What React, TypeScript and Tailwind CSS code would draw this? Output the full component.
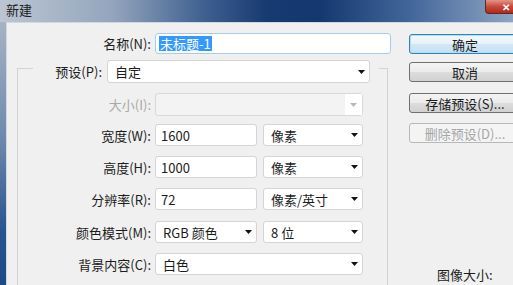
import type { ReactNode } from "react"

function Arrow({ muted = false }: { muted?: boolean }) {
  return (
    <svg width="7" height="4" viewBox="0 0 7 4" className="shrink-0">
      <path d="M0 0h7L3.5 4z" fill={muted ? "#b8b8b8" : "#111"} />
    </svg>
  )
}

function Select({ value, className }: { value: string; className: string }) {
  return (
    <div
      className={`flex h-[22px] shrink-0 items-center justify-between rounded-[3px] border border-[#d4d4d4] bg-white pl-[7px] pr-[4px] ${className}`}
    >
      <span>{value}</span>
      <Arrow />
    </div>
  )
}

function Input({ value, className }: { value: string; className: string }) {
  return (
    <div className={`flex h-[22px] shrink-0 items-center rounded-[3px] border border-[#d4d4d4] bg-white pl-[5px] ${className}`}>
      {value}
    </div>
  )
}

function Row({ label, className, muted = false, children }: { label: string; className: string; muted?: boolean; children: ReactNode }) {
  return (
    <div className={`flex items-center ${className}`}>
      <div className={`w-[133px] shrink-0 text-right ${muted ? "text-[#a8a8a8]" : ""}`}>{label}</div>
      <div className="ml-[4px] flex gap-[6px]">{children}</div>
    </div>
  )
}

function Button({ label, className }: { label: string; className: string }) {
  return (
    <div className={`flex h-[20px] w-[112px] items-center justify-center rounded-[3px] border ${className}`}>
      {label}
    </div>
  )
}

export default function App() {
  return (
    <div className="h-[285px] w-[513px] overflow-hidden bg-[#f0f0f0] text-[13px] leading-none text-[#1c1c1c] font-['Noto_Sans_CJK_SC','Noto_Sans',sans-serif]">
      {/* title bar */}
      <div className="flex h-[22px] items-start bg-[linear-gradient(90deg,#bcc6d2_0%,#93a5bd_22%,#3e5f8f_40%,#173a72_52%,#143770_62%,#43669a_80%,#8ea5c2_100%)]">
        <span className="ml-[6px] mt-[3px] text-[13px] leading-[14px] text-[#202020]">新建</span>
        <div className="flex-1" />
        <div className="flex h-[14px] w-[28px] shrink-0 items-center justify-end rounded-bl-[4px] border border-r-0 border-t-0 border-[#5a2a2a] bg-[linear-gradient(180deg,#e3968a,#c74a3a_50%,#b2281b)] pr-[3px] text-[10px] font-bold text-white">
          ✕
        </div>
      </div>

      <div className="flex h-[263px]">
        {/* left window frame */}
        <div className="w-[6px] shrink-0 bg-[linear-gradient(180deg,#a6b3c4,#6e88ad_45%,#27538f_80%,#1f4a88)]" />

        {/* client area */}
        <div className="flex flex-1 border-l border-t border-[#d2d8e0] bg-[#f0f0f0]">
          {/* form column */}
          <div className="w-[384px] shrink-0 pt-[10px]">
            <div className="flex items-center">
              <div className="w-[144px] shrink-0 text-right">名称(N):</div>
              <div className="ml-[4px] flex h-[21px] w-[236px] shrink-0 items-center rounded-[3px] border border-[#a9cbe8] bg-white pl-[3px]">
                <span className="bg-[#3399ff] px-[1px] leading-[15px] text-white">未标题-1</span>
              </div>
            </div>

            {/* group box */}
            <div className="ml-[10px] mt-[14px] h-[230px] w-[371px] border-l border-r border-t border-[#d3d3d3]">
              <div className="-mt-[9px] ml-[15px] flex h-[23px] w-[346px] items-center bg-[#f0f0f0]">
                <div className="w-[69px] shrink-0 text-right">预设(P):</div>
                <div className="ml-[5px] flex h-[23px] w-[263px] shrink-0 items-center justify-between rounded-[3px] border border-[#d4d4d4] bg-white pl-[7px] pr-[4px]">
                  <span>自定</span>
                  <Arrow />
                </div>
              </div>

              <Row label="大小(I):" className="mt-[10px]" muted>
                <div className="flex h-[23px] w-[208px] items-center justify-end rounded-[3px] border border-[#d8d8d8] bg-[#f3f3f3]">
                  <div className="flex h-[21px] w-[17px] items-center justify-center bg-white">
                    <Arrow muted />
                  </div>
                </div>
              </Row>

              <Row label="宽度(W):" className="mt-[8px]">
                <Input value="1600" className="w-[102px]" />
                <Select value="像素" className="w-[100px]" />
              </Row>

              <Row label="高度(H):" className="mt-[10px]">
                <Input value="1000" className="w-[102px]" />
                <Select value="像素" className="w-[100px]" />
              </Row>

              <Row label="分辨率(R):" className="mt-[10px]">
                <Input value="72" className="w-[102px]" />
                <Select value="像素/英寸" className="w-[100px]" />
              </Row>

              <Row label="颜色模式(M):" className="mt-[11px]">
                <Select value="RGB 颜色" className="w-[102px]" />
                <Select value="8 位" className="w-[100px]" />
              </Row>

              <Row label="背景内容(C):" className="mt-[10px]">
                <Select value="白色" className="w-[208px]" />
              </Row>
            </div>
          </div>

          {/* button column */}
          <div className="ml-[18px] shrink-0 pt-[11px]">
            <Button
              label="确定"
              className="border-[#3c7fb1] bg-[linear-gradient(180deg,#f4f9fc,#e5f1f9_50%,#d3e7f4_51%,#c6e0f2)] shadow-[inset_0_0_0_1px_#a9e2f7]"
            />
            <Button
              label="取消"
              className="mt-[8px] border-[#707070] bg-[linear-gradient(180deg,#f4f4f4,#ebebeb_50%,#dddddd_51%,#d1d1d1)]"
            />
            <Button
              label="存储预设(S)..."
              className="mt-[11px] border-[#707070] bg-[linear-gradient(180deg,#f4f4f4,#ebebeb_50%,#dddddd_51%,#d1d1d1)]"
            />
            <Button label="删除预设(D)..." className="mt-[10px] border-[#b5b9bc] bg-[#f4f4f4] text-[#a6a6a6]" />
            <div className="ml-[28px] mt-[124px] leading-[16px]">图像大小:</div>
          </div>
        </div>
      </div>
    </div>
  )
}
